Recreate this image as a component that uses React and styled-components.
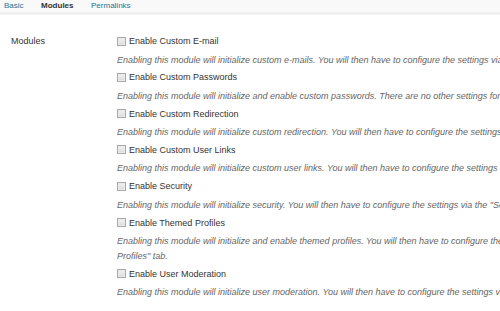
import React from "react";
import styled, { createGlobalStyle } from "styled-components";

const Global = createGlobalStyle`
  html, body { margin: 0; padding: 0; background: #fff; overflow: hidden; }
  body { font-family: "Liberation Sans", Arial, sans-serif; color: #333; }
`;

const Page = styled.div`
  width: 700px;
`;

const TabBar = styled.nav`
  display: flex;
  align-items: center;
  gap: 17.5px;
  height: 12px;
  padding-left: 4px;
  background: #f9f9f9;
  border-bottom: 1px solid #f1f1f1;
  box-shadow: 0 1px 0 #ececec, 0 2px 0 #f4f4f4;
`;

const Tab = styled.a`
  font-size: 8px;
  line-height: 12px;
  text-decoration: none;
  color: ${(p) => (p.$active ? "#333" : "#21759b")};
  font-weight: ${(p) => (p.$active ? "bold" : "normal")};
`;

const FormTable = styled.div`
  display: grid;
  grid-template-columns: 106px 520px;
  padding: 19px 0 0 11px;
`;

const RowHead = styled.div`
  font-size: 9px;
  line-height: 18px;
  color: #333;
`;

const Options = styled.div`
  display: flex;
  flex-direction: column;
`;

const Option = styled.div`
  display: flex;
  flex-direction: column;
`;

const CheckLabel = styled.label`
  display: flex;
  align-items: center;
  gap: 3px;
  font-size: 9px;
  line-height: 18px;
  color: #333;
`;

const Box = styled.span`
  box-sizing: border-box;
  width: 9px;
  height: 9px;
  border: 1px solid #a9a9a9;
  background: linear-gradient(#f4f4f4, #d9d9d9);
  box-shadow: inset 0 0 0 1px #eaeaea;
  flex: none;
`;

const Desc = styled.p`
  margin: 2.5px 0 0.83px;
  font-size: 9px;
  line-height: 15px;
  font-style: italic;
  color: #666;
  width: 505px;
`;

const modules = [
  ["Enable Custom E-mail", "Enabling this module will initialize custom e-mails. You will then have to configure the settings via the \"E-mails\" tab."],
  ["Enable Custom Passwords", "Enabling this module will initialize and enable custom passwords. There are no other settings for this module."],
  ["Enable Custom Redirection", "Enabling this module will initialize custom redirection. You will then have to configure the settings via the \"Redirection\" tab."],
  ["Enable Custom User Links", "Enabling this module will initialize custom user links. You will then have to configure the settings via the \"User Links\" tab."],
  ["Enable Security", "Enabling this module will initialize security. You will then have to configure the settings via the \"Security\" tab."],
  ["Enable Themed Profiles", "Enabling this module will initialize and enable themed profiles. You will then have to configure the settings via the \"Themed Profiles\" tab."],
  ["Enable User Moderation", "Enabling this module will initialize user moderation. You will then have to configure the settings via the \"Moderation\" tab."],
];

export default function App() {
  return (
    <Page>
      <Global />
      <TabBar>
        <Tab href="#">Basic</Tab>
        <Tab href="#" $active>Modules</Tab>
        <Tab href="#">Permalinks</Tab>
      </TabBar>
      <FormTable>
        <RowHead>Modules</RowHead>
        <Options>
          {modules.map(([label, desc]) => (
            <Option key={label}>
              <CheckLabel>
                <Box />
                {label}
              </CheckLabel>
              <Desc>{desc}</Desc>
            </Option>
          ))}
        </Options>
      </FormTable>
    </Page>
  );
}
